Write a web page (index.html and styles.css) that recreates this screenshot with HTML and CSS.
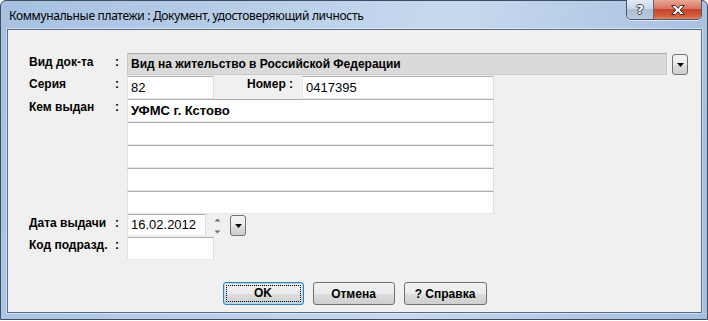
FILE: index.html
```html
<!DOCTYPE html>
<html>
  <head>
    <meta charset="utf-8">
    <link rel="stylesheet" href="styles.css">
  </head>
  <body>
    <div class="window">
      <div class="titlebar">
        <div class="title">Коммунальные платежи : Документ, удостоверяющий личность</div>
        <div class="caption">
          <div class="cap help">?</div>
          <div class="cap close">
            <svg width="16" height="12" viewBox="0 0 16 12">
              <path d="M1.5 1.5h4l2.5 2.8 2.5-2.8h4l-4.3 4.5 4.3 4.5h-4l-2.5-2.8-2.5 2.8h-4l4.3-4.5z" fill="#fff" stroke="#3a2a2a" stroke-width="1"/>
            </svg>
          </div>
        </div>
      </div>
      <div class="client">
        <div class="row r-type">
          <div class="lbl">Вид док-та</div>
          <div class="colon">:</div>
          <div class="combo">Вид на жительство в Российской Федерации</div>
          <div class="drop"><svg width="7" height="4" viewBox="0 0 7 4"><path d="M0 0h7l-3.5 4z" fill="#000"/></svg></div>
        </div>
        <div class="row r-series">
          <div class="lbl">Серия</div>
          <div class="colon">:</div>
          <div class="tb tb-short">82</div>
          <div class="lbl-num">Номер :</div>
          <div class="tb tb-num">0417395</div>
        </div>
        <div class="row r-issuer">
          <div class="lbl">Кем выдан</div>
          <div class="colon">:</div>
          <div class="lines">
            <div class="tb tb-line bold">УФМС г. Кстово</div>
            <div class="tb tb-line"></div>
            <div class="tb tb-line"></div>
            <div class="tb tb-line"></div>
            <div class="tb tb-line"></div>
          </div>
        </div>
        <div class="row r-date">
          <div class="lbl">Дата выдачи</div>
          <div class="colon">:</div>
          <div class="tb tb-date">16.02.2012</div>
          <div class="spin">
            <svg width="9" height="19" viewBox="0 0 9 19">
              <path d="M1.5 5.5l3-3 3 3z" fill="#6f6f6f"/>
              <path d="M1.5 14.5l3 3 3-3z" fill="#6f6f6f"/>
            </svg>
          </div>
          <div class="drop"><svg width="7" height="4" viewBox="0 0 7 4"><path d="M0 0h7l-3.5 4z" fill="#000"/></svg></div>
        </div>
        <div class="row r-code">
          <div class="lbl">Код подразд.</div>
          <div class="colon">:</div>
          <div class="tb tb-short"></div>
        </div>
        <div class="buttons">
          <div class="btn btn-ok"><span>OK</span></div>
          <div class="btn btn-cancel"><span>Отмена</span></div>
          <div class="btn btn-help"><span>? Справка</span></div>
        </div>
      </div>
    </div>
  </body>
</html>
```

FILE: styles.css
```css
body {
  margin: 0;
  background: #fff;
  font-family: "Liberation Sans", Arial, sans-serif;
  font-size: 12px;
  color: #000;
}
.window {
  width: 708px;
  height: 320px;
  box-sizing: border-box;
  border: 1px solid #3f4d60;
  border-radius: 6px 6px 0 0;
  background: linear-gradient(100deg, #a6c1e1 0%, #b9cfe9 35%, #c7d9ee 60%, #afc7e4 85%, #a2bddf 100%);
  display: flex;
  flex-direction: column;
}
.titlebar {
  height: 28px;
  display: flex;
  align-items: flex-start;
  justify-content: space-between;
}
.title {
  font-family: "Noto Sans", "Open Sans", sans-serif;
  font-size: 12px;
  line-height: 16px;
  padding: 7px 0 0 8px;
  color: #000;
  letter-spacing: -0.33px;
}
.caption {
  display: flex;
  margin: -1px 5px 0 0;
  border: 1px solid #4b5668;
  border-top: none;
  border-radius: 0 0 5px 5px;
  overflow: hidden;
  box-shadow: 0 1px 0 rgba(255,255,255,.6);
}
.cap {
  height: 19px;
  display: flex;
  align-items: center;
  justify-content: center;
}
.help {
  width: 26px;
  border-right: 1px solid #5d6a7c;
  background: linear-gradient(#e3ebf5 0%, #cad7e6 45%, #aebfd3 50%, #b9cade 100%);
  color: #fff;
  font-family: "DejaVu Sans", sans-serif;
  font-weight: bold;
  font-size: 13px;
  text-shadow: 1px 0 #3a4350, -1px 0 #3a4350, 0 1px #3a4350, 0 -1px #3a4350;
}
.close {
  width: 47px;
  background: linear-gradient(#e9a897 0%, #d8765f 45%, #c5422a 50%, #d2603f 85%, #e08a66 100%);
}
.client {
  flex: 1;
  margin: 0 5px 6px 6px;
  border: 1px solid #5a6b82;
  background: #f0f0f0;
  padding: 23px 0 0 21px;
  box-shadow: 0 0 0 1px rgba(255,255,255,.45);
}
.row {
  display: flex;
  align-items: flex-start;
}
.lbl {
  width: 86px;
  font-weight: bold;
  line-height: 16px;
}
.colon {
  width: 12px;
  font-weight: bold;
  line-height: 16px;
}
.r-type {
  height: 22px;
  margin-bottom: 1px;
}
.r-type .lbl, .r-type .colon, .r-date .lbl, .r-date .colon {
  padding-top: 1px;
}
.combo {
  width: 540px;
  height: 22px;
  box-sizing: border-box;
  border: 1px solid #c9c9c9;
  border-top-color: #a9a9a9;
  background: #dadada;
  font-weight: bold;
  line-height: 20px;
  padding-left: 3px;
}
.drop {
  width: 16px;
  height: 21px;
  box-sizing: border-box;
  margin: 1px 0 0 5px;
  border: 1px solid #707070;
  border-radius: 3px;
  background: linear-gradient(#f4f4f4 0%, #ebebeb 50%, #dddddd 51%, #cfcfcf 100%);
  display: flex;
  align-items: center;
  justify-content: center;
}
.tb {
  height: 23px;
  box-sizing: border-box;
  background: #fff;
  border: 1px solid #e3e9ef;
  border-top-color: #abadb3;
  border-left-color: #e2e3ea;
  border-right-color: #dbdfe6;
  font-size: 13px;
  line-height: 21px;
  padding-left: 3px;
}
.bold {
  font-weight: bold;
}
.tb-short {
  width: 87px;
}
.lbl-num {
  width: 55px;
  margin-left: 33px;
  font-weight: bold;
  line-height: 16px;
}
.tb-num {
  width: 192px;
}
.tb-line {
  width: 367px;
}
.r-date {
  margin-bottom: 1px;
}
.tb-date {
  width: 79px;
  height: 22px;
  line-height: 20px;
}
.spin {
  width: 22px;
  height: 22px;
  display: flex;
  align-items: center;
  justify-content: center;
}
.r-date .drop {
  margin-left: 2px;
}
.buttons {
  display: flex;
  justify-content: center;
  gap: 9px;
  margin: 22px 0 0 -21px;
}
.btn {
  height: 23px;
  box-sizing: border-box;
  border: 1px solid #707070;
  border-radius: 3px;
  background: linear-gradient(#f2f2f2 0%, #ebebeb 50%, #dddddd 51%, #cfcfcf 100%);
  font-weight: bold;
  display: flex;
  align-items: center;
  justify-content: center;
}
.btn-ok {
  width: 81px;
  border-color: #3c7fb1;
  box-shadow: inset 0 0 0 1px #a8dcf5;
}
.btn-ok span {
  display: block;
  width: 73px;
  height: 15px;
  line-height: 15px;
  text-align: center;
  outline: 1px dotted #000;
}
.btn-cancel {
  width: 82px;
}
.btn-help {
  width: 83px;
}
```
